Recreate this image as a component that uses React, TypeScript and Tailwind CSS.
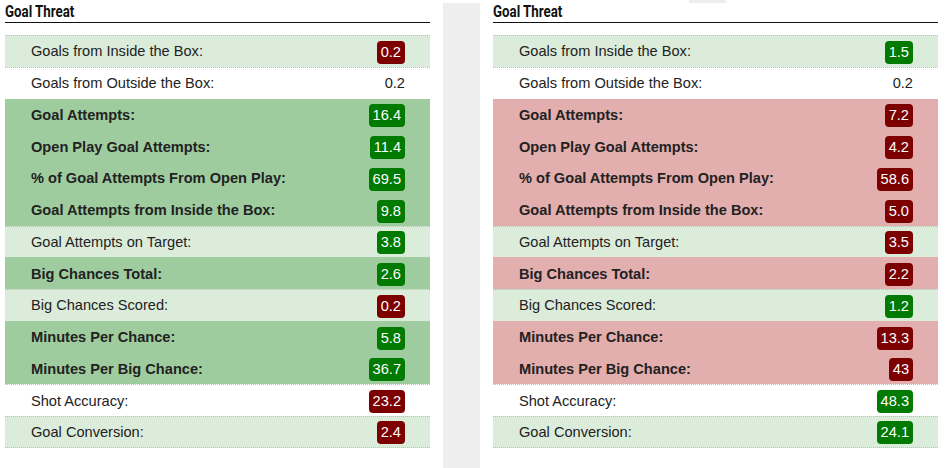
import React from 'react';

type Tone = 'light' | 'white' | 'green' | 'pink';
type Badge = 'g' | 'r' | null;

type Row = {
  label: string;
  value: string;
  tone: Tone;
  badge: Badge;
};

const labels = [
  'Goals from Inside the Box:',
  'Goals from Outside the Box:',
  'Goal Attempts:',
  'Open Play Goal Attempts:',
  '% of Goal Attempts From Open Play:',
  'Goal Attempts from Inside the Box:',
  'Goal Attempts on Target:',
  'Big Chances Total:',
  'Big Chances Scored:',
  'Minutes Per Chance:',
  'Minutes Per Big Chance:',
  'Shot Accuracy:',
  'Goal Conversion:',
];

const leftRows: Row[] = [
  ['0.2', 'light', 'r'],
  ['0.2', 'white', null],
  ['16.4', 'green', 'g'],
  ['11.4', 'green', 'g'],
  ['69.5', 'green', 'g'],
  ['9.8', 'green', 'g'],
  ['3.8', 'light', 'g'],
  ['2.6', 'green', 'g'],
  ['0.2', 'light', 'r'],
  ['5.8', 'green', 'g'],
  ['36.7', 'green', 'g'],
  ['23.2', 'white', 'r'],
  ['2.4', 'light', 'r'],
].map(([value, tone, badge], i) => ({ label: labels[i], value, tone, badge } as Row));

const rightRows: Row[] = [
  ['1.5', 'light', 'g'],
  ['0.2', 'white', null],
  ['7.2', 'pink', 'r'],
  ['4.2', 'pink', 'r'],
  ['58.6', 'pink', 'r'],
  ['5.0', 'pink', 'r'],
  ['3.5', 'light', 'r'],
  ['2.2', 'pink', 'r'],
  ['1.2', 'light', 'g'],
  ['13.3', 'pink', 'r'],
  ['43', 'pink', 'r'],
  ['48.3', 'white', 'g'],
  ['24.1', 'light', 'g'],
].map(([value, tone, badge], i) => ({ label: labels[i], value, tone, badge } as Row));

const toneClass: Record<Tone, string> = {
  light: 'bg-[#dcecdb]',
  white: 'bg-white',
  green: 'bg-[#9fcc9f] font-bold',
  pink: 'bg-[#e3aeae] font-bold',
};

function StatRow({ row }: { row: Row }) {
  return (
    <div
      className={`flex h-[31.75px] items-center justify-between border-t border-dotted border-[#bdbdbd] pt-[2px] pl-[26px] pr-[25px] last:border-b ${toneClass[row.tone]}`}
    >
      <span>{row.label}</span>
      {row.badge ? (
        <span
          className={`rounded-[4px] px-1 py-[2px] leading-[19px] font-normal text-white ${
            row.badge === 'g' ? 'bg-[#007a00]' : 'bg-[#7c0000]'
          }`}
        >
          {row.value}
        </span>
      ) : (
        <span className="font-normal">{row.value}</span>
      )}
    </div>
  );
}

function Panel({ rows, width }: { rows: Row[]; width: string }) {
  return (
    <div className={`${width} shrink-0`}>
      <div className="h-[23px] border-b border-[#111] pt-[2px]">
        <h3
          className="block h-[19px] origin-left scale-x-[0.83] text-[16px] leading-[19px] font-bold text-[#111]"
          style={{ fontFamily: 'Roboto, sans-serif' }}
        >
          Goal Threat
        </h3>
      </div>
      <div className="mt-[12px]">
        {rows.map((r) => (
          <StatRow key={r.label} row={r} />
        ))}
      </div>
    </div>
  );
}

export default function App() {
  return (
    <div
      className="relative flex h-[468px] w-[948px] bg-white text-[14.6px] text-[#222]"
      style={{ fontFamily: '"Liberation Sans", Arial, sans-serif' }}
    >
      {/* peeking tab at the very top */}
      <div className="absolute left-[689px] top-0 h-[3px] w-[37px] bg-[#eeeeee]" />

      <div className="ml-[5px] flex">
        <Panel rows={leftRows} width="w-[425px]" />
        <div className="mx-[13px] mt-[3px] w-[37px] bg-[#eeeeee]" />
        <Panel rows={rightRows} width="w-[445px]" />
      </div>
    </div>
  );
}
